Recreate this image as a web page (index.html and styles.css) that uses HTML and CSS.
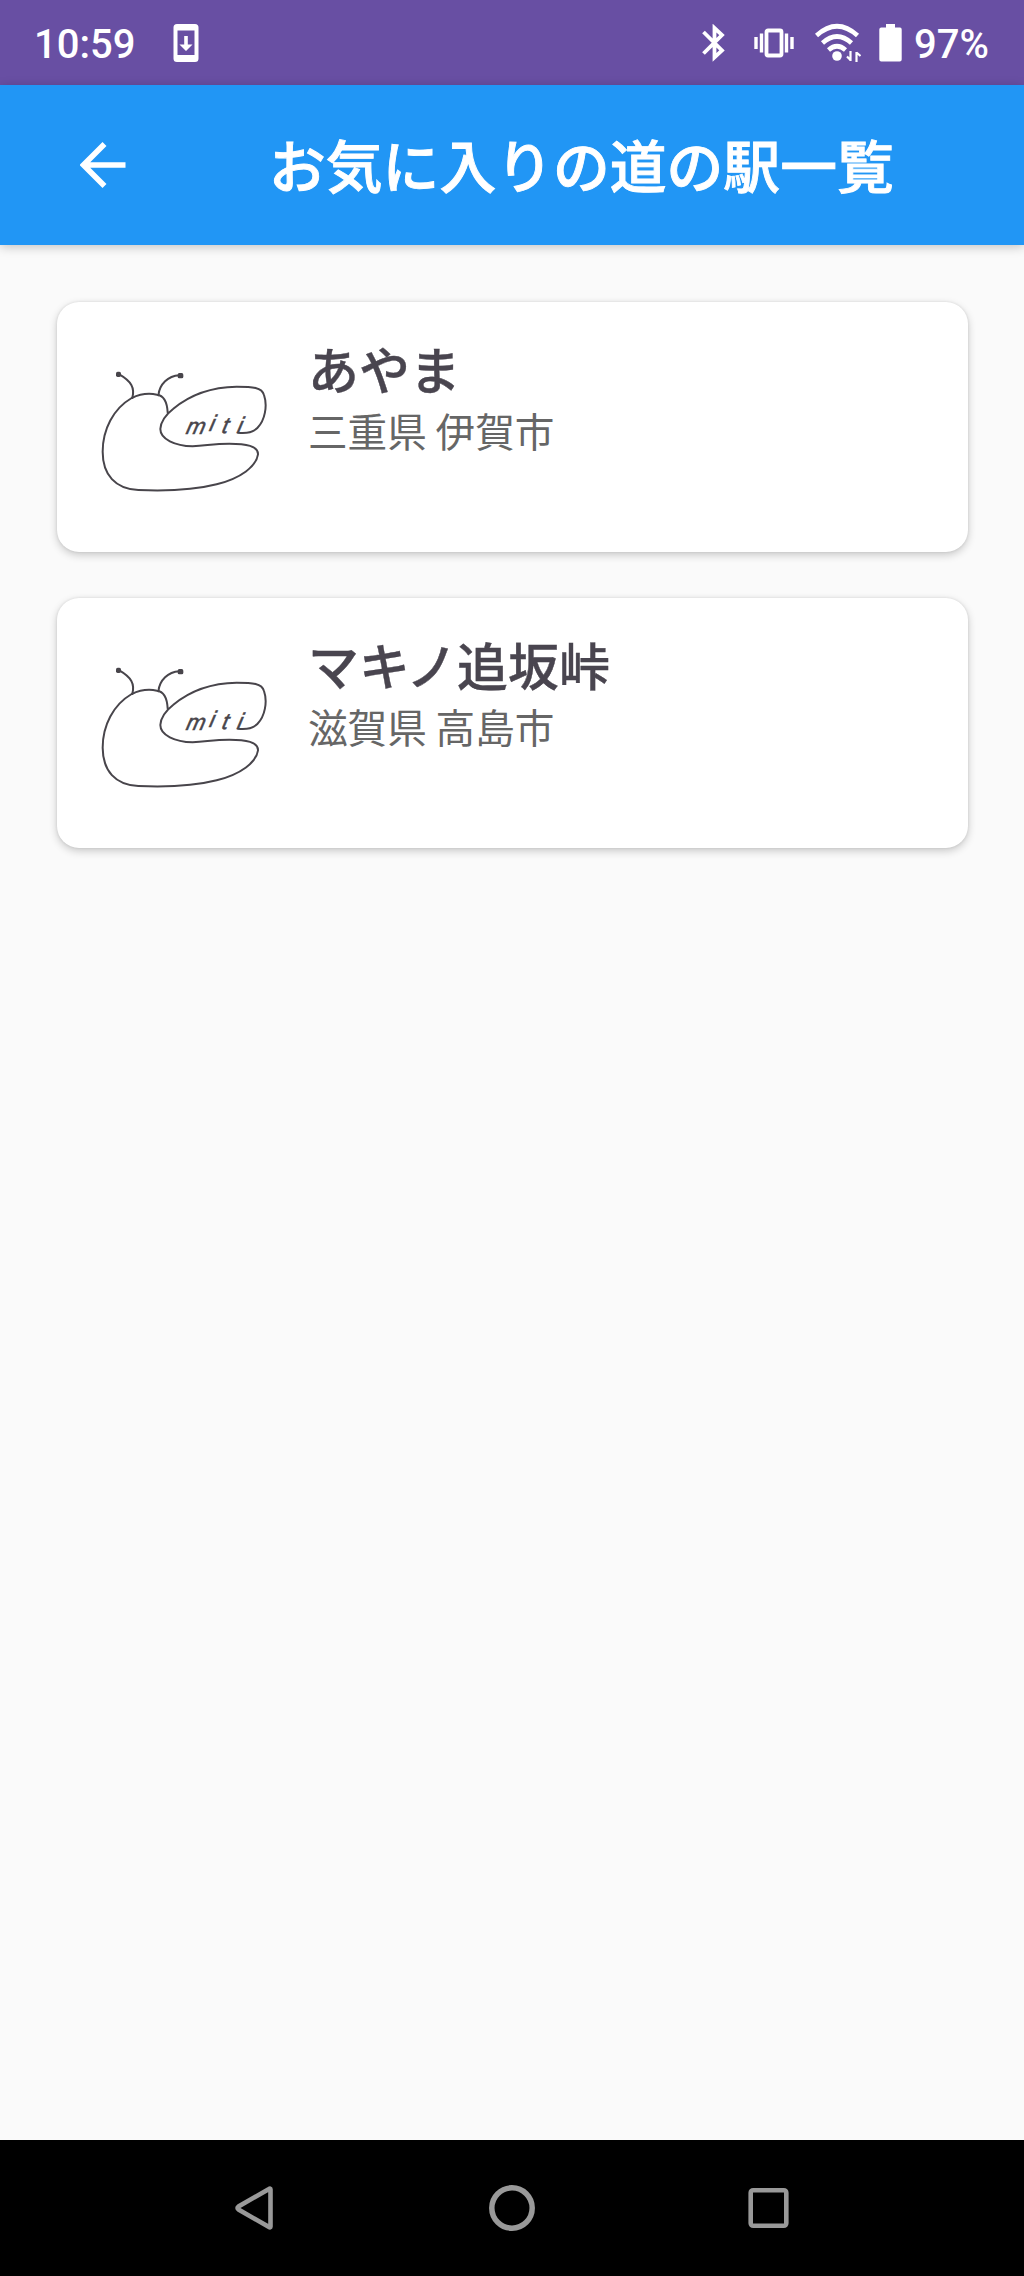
FILE: index.html
```html
<!DOCTYPE html>
<html lang="ja">
<head>
<meta charset="utf-8">
<title>お気に入りの道の駅一覧</title>
<link rel="stylesheet" href="styles.css">
</head>
<body>
<svg class="defs" width="0" height="0">
  <symbol id="miti-logo" viewBox="180 261 510 390">
    <g fill="none" stroke="#48454b" stroke-width="6" stroke-linecap="round" stroke-linejoin="round">
      <path d="M383 397C381 363 370 346 351 344C324 338 302 341 275 354C220 386 188 448 188 515C188 584 226 627 295 630C370 633 460 631 530 613C604 594 649 559 654 523C655 498 618 491 568 491C520 491 500 497 458 499C405 497 361 478 361 447C362 423 376 405 400 386C454 341 519 321 590 320C638 320 666 322 672 345C683 377 675 421 652 444C640 456 622 461 594 458"/>
      <path d="M277 354C285 323 274 304 238 283M355 346C359 312 384 288 418 286"/>
    </g>
    <rect x="228" y="275" width="15" height="16" rx="5" fill="#48454b"/>
    <rect x="413" y="279" width="17" height="16" rx="5" fill="#48454b"/>
    <text class="logo-text" x="436 504 543 589" y="2 -5 0 0" transform="translate(0 459) skewX(-13)">miti</text>
  </symbol>
</svg>

<header class="status">
  <div class="status-left">
    <span class="status-text">10:59</span>
    <svg width="26" height="40" viewBox="0 0 26 40">
      <path fill="#fff" fill-rule="evenodd" d="M4 1H22Q25.500 1 25.500 4.500V35.500Q25.500 39 22 39H4Q.5 39 .5 35.500V4.500Q.5 1 4 1ZM4.500 7.500V32H21.500V7.500Z"/>
      <path fill="#fff" d="M11.200 13H14.800V21.500H19.500L13 28L6.500 21.500H11.200Z"/>
    </svg>
  </div>
  <div class="status-right">
    <svg class="bluetooth" width="24" height="38" viewBox="0 0 24 38">
      <path fill="none" stroke="#fff" stroke-width="3.800" d="M1.500 8L20 26.500L12.500 33.500V4L20 11L1.500 29.500"/>
    </svg>
    <svg class="vibrate" width="42" height="32" viewBox="0 0 42 32">
      <rect x="13.500" y="3.500" width="15" height="25" rx="1.500" fill="none" stroke="#fff" stroke-width="3.800"/>
      <path stroke="#fff" stroke-width="3.400" d="M3 10V22M8.500 6.500V25.500M33.500 6.500V25.500M39 10V22"/>
    </svg>
    <svg class="wifi" width="46" height="40" viewBox="0 0 46 40">
      <g fill="none" stroke="#fff" stroke-width="4.600">
        <path d="M1.500 12.500Q22 -6 42.500 12.500M7.500 20Q22 7 36.500 20M13.500 27Q22 19.500 30.500 27"/>
      </g>
      <circle cx="22" cy="33" r="4.800" fill="#fff"/>
      <path fill="none" stroke="#fff" stroke-width="2.200" d="M35.500 28V38M35.500 37L32 33.500M41.500 39V29M41.500 29.500L45.500 33"/>
    </svg>
    <svg class="battery" width="23" height="40" viewBox="0 0 23 40">
      <path fill="#fff" d="M7 1H16V4.500H21Q22.700 4.500 22.700 6.500V36.500Q22.700 38.500 20.700 38.500H2.300Q.3 38.500 .3 36.500V6.500Q.3 4.500 2.300 4.500H7Z"/>
    </svg>
    <span class="status-text">97%</span>
  </div>
</header>

<nav class="appbar">
  <svg class="back" width="46" height="46" viewBox="0 0 46 46">
    <path fill="none" stroke="#fff" stroke-width="5.600" d="M45.500 23H5M24.500 2L3.500 23L24.500 44"/>
  </svg>
  <h1 class="title">お気に入りの道の駅一覧</h1>
</nav>

<main class="list">
  <article class="card">
    <svg class="logo"><use href="#miti-logo"/></svg>
    <div class="info">
      <h2 class="name">あやま</h2>
      <p class="place">三重県 伊賀市</p>
    </div>
  </article>
  <article class="card">
    <svg class="logo"><use href="#miti-logo"/></svg>
    <div class="info">
      <h2 class="name">マキノ追坂峠</h2>
      <p class="place">滋賀県 高島市</p>
    </div>
  </article>
</main>

<footer class="navbar">
  <svg width="64" height="64" viewBox="0 0 64 64"><path d="M46.500 13.500V50.500Q46.500 52 45 51L14.500 33.500Q12.500 32 14.500 30.500L45 13Q46.500 12 46.500 13.500Z"/></svg>
  <svg width="64" height="64" viewBox="0 0 64 64"><circle class="home" cx="32" cy="32" r="20.200"/></svg>
  <svg width="64" height="64" viewBox="0 0 64 64"><rect x="14.700" y="14.200" width="35.600" height="35.600" rx="2.500"/></svg>
</footer>
</body>
</html>
```

FILE: styles.css
```css
* { box-sizing: border-box; }

body {
  margin: 0;
  width: 1024px;
  height: 2276px;
  display: flex;
  flex-direction: column;
  background: #fafafa;
  font-family: Roboto, "Noto Sans CJK JP", sans-serif;
  overflow: hidden;
}

svg { display: block; flex: none; }
.defs { display: none; }

.status {
  flex: none;
  height: 85px;
  padding: 0 35px 0 34px;
  display: flex;
  justify-content: space-between;
  background: #684fa3;
  color: #fff;
}
.status-left, .status-right { display: flex; align-items: center; }
.status-left { gap: 38px; }
.status-text {
  font-size: 40px;
  font-weight: 500;
  line-height: 48px;
  padding-top: 5px;
}
.bluetooth { margin-right: 27px; }
.vibrate { margin-right: 20px; }
.wifi { margin-right: 18px; }
.battery { margin-right: 12px; }

.appbar {
  flex: none;
  position: relative;
  height: 160px;
  padding-left: 80px;
  display: flex;
  align-items: center;
  background: #2196f5;
  box-shadow: 0 2px 10px rgba(0, 0, 0, .22);
}
.title {
  margin: 0 0 4px 143px;
  font: 500 56.8px/80px "Noto Sans CJK JP", sans-serif;
  color: #fff;
  -webkit-text-stroke: .9px #fff;
  white-space: nowrap;
}

.list {
  flex: 1;
  padding: 57px 56px 0 57px;
  display: flex;
  flex-direction: column;
  gap: 46px;
}
.card {
  height: 250px;
  padding-left: 43px;
  display: flex;
  background: #fff;
  border-radius: 22px;
  box-shadow: 0 3px 9px rgba(0, 0, 0, .2), 0 0 3px rgba(0, 0, 0, .1);
}
.logo { width: 170px; height: 130px; margin-top: 65px; }
.logo-text {
  font: italic 400 68px "Liberation Sans", sans-serif;
  fill: #48454b;
  stroke: #48454b;
  stroke-width: 1.5px;
}
.info { margin: 32px 0 0 38px; }
.name {
  margin: 0;
  font: 500 50.9px/68px "Noto Sans CJK JP", sans-serif;
  color: #49454f;
  -webkit-text-stroke: .4px #49454f;
}
.place {
  margin: 0;
  font: 400 39.6px/56px "Noto Sans CJK JP", sans-serif;
  color: #666;
}

.navbar {
  flex: none;
  height: 136px;
  padding: 0 128px;
  display: grid;
  grid-template-columns: repeat(3, 256px);
  place-items: center;
  background: #000;
}
.navbar svg { fill: none; stroke: #999; stroke-width: 4.6; }
.navbar .home { stroke-width: 5.5; }
```
